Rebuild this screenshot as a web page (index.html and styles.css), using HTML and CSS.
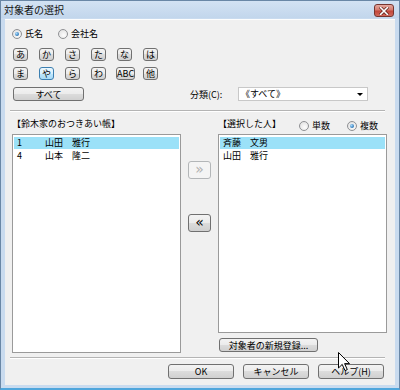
FILE: index.html
```html
<!DOCTYPE html>
<html lang="ja">
<head>
    <meta charset="UTF-8">
    <title>対象者の選択</title>
    <link rel="stylesheet" href="styles.css">
</head>
<body>
    <div class="window">
        <div class="titlebar">
            <span class="title">対象者の選択</span>
            <span class="close">
                <svg width="10" height="8" viewBox="0 0 10 8">
                    <path d="M1.5 0.5 L8.5 7.5 M8.5 0.5 L1.5 7.5" stroke="#5a1d18" stroke-width="3" stroke-linecap="square"/>
                    <path d="M1.5 0.5 L8.5 7.5 M8.5 0.5 L1.5 7.5" stroke="#ffffff" stroke-width="1.6" stroke-linecap="square"/>
                </svg>
            </span>
        </div>

        <div class="client">
            <div class="name-type">
                <label class="radio checked"><i></i>氏名</label>
                <label class="radio"><i></i>会社名</label>
            </div>

            <div class="kana">
                <button class="btn k">あ</button>
                <button class="btn k">か</button>
                <button class="btn k">さ</button>
                <button class="btn k">た</button>
                <button class="btn k">な</button>
                <button class="btn k">は</button>
                <button class="btn k">ま</button>
                <button class="btn k active">や</button>
                <button class="btn k">ら</button>
                <button class="btn k">わ</button>
                <button class="btn k abc">ABC</button>
                <button class="btn k">他</button>
            </div>

            <div class="filter-row">
                <button class="btn all">すべて</button>
                <span class="cat-label">分類(C):</span>
                <div class="combo">
                    <span>《すべて》</span>
                    <span class="drop"></span>
                </div>
            </div>

            <div class="sep"></div>

            <div class="lists">
                <div class="col">
                    <div class="col-head">【鈴木家のおつきあい帳】</div>
                    <div class="listbox source">
                        <div class="item selected"><span class="no">1</span>山田　雅行</div>
                        <div class="item"><span class="no">4</span>山本　隆二</div>
                    </div>
                </div>

                <div class="mid">
                    <button class="btn move" disabled>»</button>
                    <button class="btn move">«</button>
                </div>

                <div class="col">
                    <div class="col-head">
                        <span>【選択した人】</span>
                        <div class="mode">
                            <label class="radio"><i></i>単数</label>
                            <label class="radio checked"><i></i>複数</label>
                        </div>
                    </div>
                    <div class="listbox target">
                        <div class="item selected">斉藤　文男</div>
                        <div class="item">山田　雅行</div>
                    </div>
                    <button class="btn new">対象者の新規登録...</button>
                </div>
            </div>

            <div class="sep bottom"></div>

            <div class="footer">
                <button class="btn foot">OK</button>
                <button class="btn foot">キャンセル</button>
                <button class="btn foot">ヘルプ(H)</button>
            </div>
        </div>

        <!-- mouse pointer over the dialog -->
        <svg class="cursor" width="13" height="20" viewBox="0 0 13 20">
            <path d="M0.5 0.5 L0.5 16 L4.2 12.4 L7 18.6 L9.3 17.6 L6.6 11.6 L11.5 11.6 Z" fill="#fff" stroke="#000" stroke-width="1" stroke-linejoin="round"/>
        </svg>
    </div>
</body>
</html>
```

FILE: styles.css
```css
* {
    box-sizing: border-box;
}
body {
    margin: 0;
    font-family: "Noto Sans CJK JP", "Liberation Sans", sans-serif;
    font-size: 9px;
    color: #000;
}
.window {
    position: relative;
    width: 400px;
    height: 390px;
    background: #c9dbef;
    border: 1px solid #6a87a6;
    border-bottom: 2px solid #4fa6dc;
    display: flex;
    flex-direction: column;
}
.titlebar {
    height: 17px;
    display: flex;
    align-items: center;
    padding: 0 5px 0 3px;
    background: linear-gradient(#d3e2f3, #c2d6ec);
}
.title {
    font-size: 10px;
    line-height: 12px;
    color: #111;
}
.close {
    margin-left: auto;
    margin-top: 2px;
    width: 20px;
    height: 13px;
    border: 1px solid #76352f;
    border-radius: 3px;
    background: linear-gradient(#e6a99f 0%, #d57a6d 45%, #c2473b 55%, #d0685b 100%);
    display: flex;
    align-items: center;
    justify-content: center;
}
.client {
    flex: 1;
    margin: 1px 4px 3px 4px;
    background: #f0f0f0;
    border-top: 1px solid #fdfdfd;
    padding: 8px 8px 0 7px;
    display: flex;
    flex-direction: column;
}

/* radios */
.radio {
    display: flex;
    align-items: center;
    gap: 3px;
    line-height: 12px;
    height: 12px;
}
.radio i {
    width: 10px;
    height: 10px;
    border: 1px solid #8f9194;
    border-radius: 50%;
    background: radial-gradient(circle at 60% 65%, #fdfdfd 0%, #dcdcdc 100%);
    position: relative;
}
.radio.checked i::after {
    content: "";
    position: absolute;
    left: 2px;
    top: 2px;
    width: 4px;
    height: 4px;
    border-radius: 50%;
    background: radial-gradient(circle at 35% 35%, #a9dbff 0%, #2f79b7 70%, #1d4f80 100%);
}
.name-type {
    display: flex;
    gap: 15px;
}

/* buttons */
.btn {
    font: inherit;
    font-size: 9px;
    line-height: 11px;
    color: #000;
    padding: 0;
    height: 14px;
    border: 1px solid #707070;
    border-radius: 3px;
    background: linear-gradient(#f3f3f3 0%, #ebebeb 50%, #dcdcdc 50%, #d0d0d0 100%);
}
.kana {
    margin: 8px 0 0 1px;
    display: grid;
    grid-template-columns: repeat(6, 26px);
    row-gap: 6px;
    justify-items: start;
}
.btn.k {
    width: 15px;
    height: 13px;
}
.btn.k.abc {
    width: 19px;
    margin-left: -1px;
}
.btn.k.active {
    border-color: #3c7fb1;
    background: linear-gradient(#ebf7fe 0%, #d9f0fc 50%, #bee6fd 50%, #a9dbf6 100%);
}
.filter-row {
    margin-top: 7px;
    display: flex;
    align-items: center;
}
.btn.all {
    width: 71px;
    margin-left: 1px;
}
.cat-label {
    width: 48px;
    margin-left: 106px;
}
.combo {
    width: 130px;
    height: 14px;
    background: #fff;
    border: 1px solid #c8c8c8;
    display: flex;
    align-items: center;
    padding: 0 4px 0 2px;
    line-height: 12px;
}
.drop {
    margin-left: auto;
    width: 0;
    height: 0;
    border-left: 3px solid transparent;
    border-right: 3px solid transparent;
    border-top: 3px solid #000;
}
.sep {
    margin: 9px 2px 0 -2px;
    height: 2px;
    border-top: 1px solid #b4b4b4;
    border-bottom: 1px solid #ffffff;
}
.sep.bottom {
    margin-top: 4px;
}

/* lists */
.lists {
    margin-top: 5px;
    display: grid;
    grid-template-columns: 169px 37px 169px;
}
.col {
    display: flex;
    flex-direction: column;
}
.col-head {
    height: 14px;
    margin-bottom: 3px;
    display: flex;
    align-items: center;
    line-height: 12px;
}
.mode {
    margin-left: auto;
    margin-right: 9px;
    margin-top: 4px;
    display: flex;
    gap: 17px;
}
.listbox {
    background: #fff;
    border: 1px solid #9a9a9a;
    padding: 2px 1px;
}
.listbox.source {
    height: 219px;
}
.listbox.target {
    height: 199px;
}
.item {
    height: 12px;
    line-height: 12px;
    padding-left: 3px;
    margin-bottom: 1px;
    white-space: nowrap;
}
.item.selected {
    background: #9be1f8;
}
.no {
    display: inline-block;
    width: 28px;
}
.mid {
    display: flex;
    flex-direction: column;
    align-items: center;
    padding-top: 44px;
    gap: 35px;
}
.btn.move {
    width: 23px;
    height: 18px;
    font-family: "DejaVu Sans", sans-serif;
    font-size: 14px;
    line-height: 14px;
    padding-bottom: 2px;
}
.btn.move:disabled {
    color: #b0b0b0;
    border-color: #b3b6b8;
    background: #f4f4f4;
}
.btn.new {
    margin-top: 5px;
    margin-left: 1px;
    width: 99px;
}

/* footer */
.footer {
    margin-top: 5px;
    display: flex;
    justify-content: flex-end;
    gap: 9px;
    padding-right: 3px;
}
.btn.foot {
    width: 66px;
    height: 15px;
}
.cursor {
    position: absolute;
    left: 337px;
    top: 351px;
}
```
